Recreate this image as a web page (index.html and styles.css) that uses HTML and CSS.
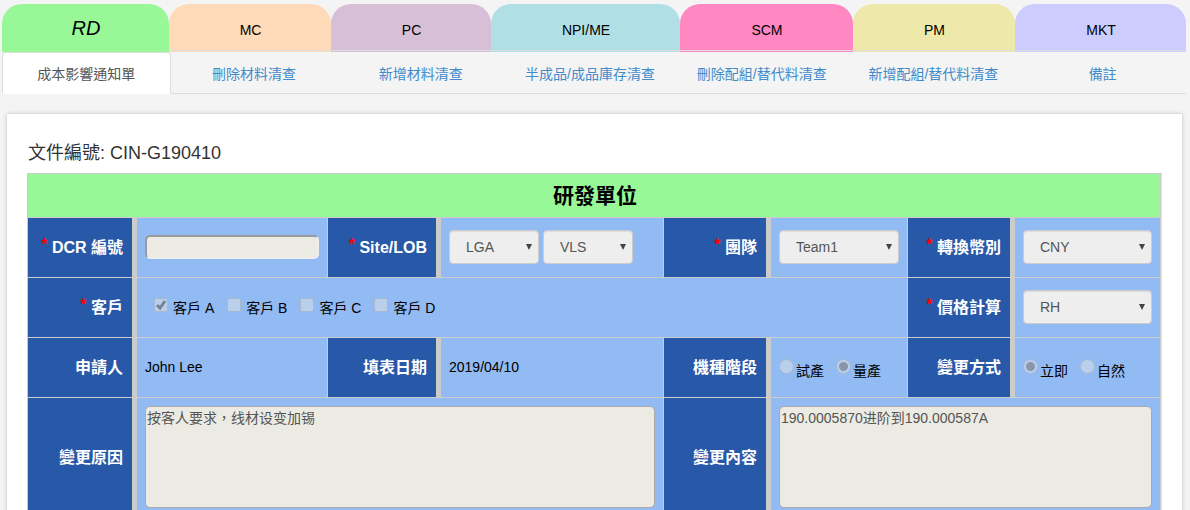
FILE: index.html
```html
<!DOCTYPE html>
<html lang="zh-Hant">
<head>
<meta charset="utf-8">
<title>成本影響通知單</title>
<link rel="stylesheet" href="styles.css">
</head>
<body>
<nav class="units">
  <a href="#rd" class="unit unit-rd active">RD</a>
  <a href="#mc" class="unit unit-mc">MC</a>
  <a href="#pc" class="unit unit-pc">PC</a>
  <a href="#npi" class="unit unit-npi">NPI/ME</a>
  <a href="#scm" class="unit unit-scm">SCM</a>
  <a href="#pm" class="unit unit-pm">PM</a>
  <a href="#mkt" class="unit unit-mkt">MKT</a>
</nav>
<nav class="pages">
  <a href="#p1" class="page active">成本影響通知單</a>
  <a href="#p2" class="page">刪除材料清查</a>
  <a href="#p3" class="page">新增材料清查</a>
  <a href="#p4" class="page wide">半成品/成品庫存清查</a>
  <a href="#p5" class="page wide">刪除配組/替代料清查</a>
  <a href="#p6" class="page wide">新增配組/替代料清查</a>
  <a href="#p7" class="page">備註</a>
</nav>
<main class="card">
  <h1 class="doc">文件編號: CIN-G190410</h1>
  <table class="form">
    <colgroup>
      <col class="l1"><col class="f1"><col class="l2"><col class="f2"><col class="l3"><col class="f3"><col class="l3"><col class="f4">
    </colgroup>
    <thead>
      <tr><th class="title" colspan="8">研發單位</th></tr>
    </thead>
    <tbody>
      <tr>
        <th><span class="req">*</span> <label for="dcr">DCR 編號</label></th>
        <td><input id="dcr" class="text" type="text" disabled></td>
        <th><span class="req">*</span> <label for="site">Site/LOB</label></th>
        <td><div class="pair"><select id="site" class="select short" disabled><option>LGA</option></select><select class="select short" aria-label="LOB" disabled><option>VLS</option></select></div></td>
        <th><span class="req">*</span> <label for="team">團隊</label></th>
        <td><select id="team" class="select" disabled><option>Team1</option></select></td>
        <th><span class="req">*</span> <label for="cur">轉換幣別</label></th>
        <td><select id="cur" class="select" disabled><option>CNY</option></select></td>
      </tr>
      <tr>
        <th><span class="req">*</span> 客戶</th>
        <td colspan="5"><div class="checks">
          <label class="check"><input type="checkbox" checked disabled><span>客戶 A</span></label>
          <label class="check"><input type="checkbox" disabled><span>客戶 B</span></label>
          <label class="check"><input type="checkbox" disabled><span>客戶 C</span></label>
          <label class="check"><input type="checkbox" disabled><span>客戶 D</span></label>
        </div></td>
        <th><span class="req">*</span> <label for="price">價格計算</label></th>
        <td><select id="price" class="select" disabled><option>RH</option></select></td>
      </tr>
      <tr>
        <th>申請人</th>
        <td>John Lee</td>
        <th>填表日期</th>
        <td>2019/04/10</td>
        <th>機種階段</th>
        <td><div class="radios">
          <label class="radio"><input type="radio" name="stage" disabled><span>試產</span></label>
          <label class="radio"><input type="radio" name="stage" checked disabled><span>量產</span></label>
        </div></td>
        <th>變更方式</th>
        <td><div class="radios">
          <label class="radio"><input type="radio" name="mode" checked disabled><span>立即</span></label>
          <label class="radio"><input type="radio" name="mode" disabled><span>自然</span></label>
        </div></td>
      </tr>
      <tr class="tall">
        <th><label for="reason">變更原因</label></th>
        <td colspan="3"><textarea id="reason" class="area" disabled>按客人要求，线材设变加锡</textarea></td>
        <th><label for="content">變更內容</label></th>
        <td colspan="3"><textarea id="content" class="area" disabled>190.0005870进阶到190.000587A</textarea></td>
      </tr>
    </tbody>
  </table>
</main>
</body>
</html>
```
FILE: styles.css
```css
* { box-sizing: border-box; }

html { overflow: hidden; }

body {
  margin: 0;
  padding: 4px 4px 0 2px;
  background: #f4f4f4;
  color: #000;
  font: 14px/20px "Liberation Sans", "Noto Sans CJK TC", sans-serif;
}

input, select, textarea { font: inherit; }

/* Unit tabs */
.units, .pages { display: flex; }

.unit {
  display: flex;
  align-items: center;
  justify-content: center;
  height: 48px;
  padding: 4px 0 0 1px;
  border-radius: 20px 20px 0 0;
  color: #000;
  text-decoration: none;
  box-shadow: inset 0 -1px var(--tab), inset 0 -2px #ddd;
  background: var(--tab);
}
.unit.active {
  padding-top: 0;
  font-size: 20px;
  font-style: italic;
  box-shadow: none;
}
.unit-rd { --tab: #98f898; flex: 167 1 0; }
.unit-mc { --tab: #ffdab9; flex: 162 1 0; }
.unit-pc { --tab: #d8bfd8; flex: 160 1 0; }
.unit-npi { --tab: #b0e0e6; flex: 189 1 0; }
.unit-scm { --tab: #ff88c2; flex: 173 1 0; }
.unit-pm { --tab: #eee8aa; flex: 162 1 0; }
.unit-mkt { --tab: #ccccff; flex: 171 1 0; }

/* Page tabs */
.page {
  flex: 167 1 0;
  height: 42px;
  padding: 12px 0 9px;
  border-bottom: 1px solid #ddd;
  color: #428bca;
  text-align: center;
  text-decoration: none;
  white-space: nowrap;
}
.page.wide { flex-grow: 172; }
.page.active {
  padding-top: 11px;
  border: 1px solid #ddd;
  border-bottom-color: #fff;
  border-radius: 4px 4px 0 0;
  background: #fff;
  color: #555;
}

/* Form card */
.card {
  margin: 20px 4px 0 5px;
  padding: 26px 20px 20px;
  background: #fff;
  box-shadow: 0 0 4px #bbb;
}

.doc {
  margin: 0;
  padding: 0 0 6px 1px;
  color: #333;
  font-size: 18px;
  font-weight: 400;
  line-height: 27px;
}

.form {
  width: 100%;
  table-layout: fixed;
  border-collapse: separate;
  border-spacing: 0;
  border-top: 1px solid #ccc;
  border-right: 1px solid #f5deb3;
}
.l1 { width: 110px; }
.f1 { width: 190px; }
.l2 { width: 114px; }
.f2 { width: 222px; }
.l3 { width: 108px; }
.f3 { width: 136px; }
.f4 { width: 146px; }

.form th, .form td {
  height: 60px;
  border-bottom: 1px solid #ccc;
  vertical-align: middle;
}
.form th {
  padding: 0 9px 0 8px;
  border-left: 1px solid #ccc;
  border-right: 5px solid #ccc;
  background: #2858a8;
  color: #fff;
  font-size: 16px;
  text-align: right;
  white-space: nowrap;
}
.form td {
  padding: 0 8px 2px;
  background: #92baf3;
}
.form td:last-child { border-right: 1px solid #ccc; }
.form .title {
  height: 44px;
  padding: 0 0 0 2px;
  border-right-width: 1px;
  background: #98f898;
  color: #000;
  font-size: 21px;
  text-align: center;
}
.form .tall th, .form .tall td { height: 120px; }

.req {
  color: #f00;
  font-size: 16px;
  line-height: 1;
  vertical-align: 3px;
}

/* Controls */
.text {
  display: block;
  width: 100%;
  height: 24px;
  padding: 1px 4px;
  border: 2px inset #eee;
  border-radius: 5px;
  background: #ebebe4;
}

.select {
  display: block;
  width: 100%;
  height: 34px;
  padding: 6px 16px;
  border: 1px solid #ccc;
  border-radius: 4px;
  appearance: none;
  background: #eee url("data:image/svg+xml,%3Csvg xmlns='http://www.w3.org/2000/svg' width='6' height='6'%3E%3Cpath d='M0 0h6L3 6z' fill='%23444'/%3E%3C/svg%3E") no-repeat right 6px center;
  box-shadow: inset 0 1px 1px rgba(0, 0, 0, 0.075);
  color: #555;
  opacity: 1;
}
.pair { display: flex; gap: 4px; }
.short { width: 90px; }

.checks { display: flex; gap: 13px; padding: 2px 0 0 9px; }
.check { display: flex; align-items: center; gap: 5px; }
.check input, .radio input {
  flex: none;
  appearance: none;
  margin: 0 0 6px;
  border: 1px solid #a9b8cd;
  background: #b9cfec center no-repeat;
}
.check input {
  width: 14px;
  height: 14px;
  border-radius: 2px;
}
.check input:checked {
  background-image: url("data:image/svg+xml,%3Csvg xmlns='http://www.w3.org/2000/svg' width='12' height='12'%3E%3Cpath d='M2 6l3 3L10 2' fill='none' stroke='%23748494' stroke-width='3'/%3E%3C/svg%3E");
}

.radios { display: flex; gap: 12px; }
.radio { display: flex; align-items: center; gap: 2px; padding-top: 8px; }
.radio input {
  width: 15px;
  height: 15px;
  margin-bottom: 8px;
  border-radius: 50%;
}
.radio input:checked {
  background-image: radial-gradient(circle, #8996aa 4px, transparent 5px);
}

.area {
  display: block;
  width: 100%;
  height: 102px;
  padding: 1px;
  border: 1px solid #a9a9a9;
  border-radius: 5px;
  resize: none;
  background: #ebebe4;
  color: #545454;
}
```
